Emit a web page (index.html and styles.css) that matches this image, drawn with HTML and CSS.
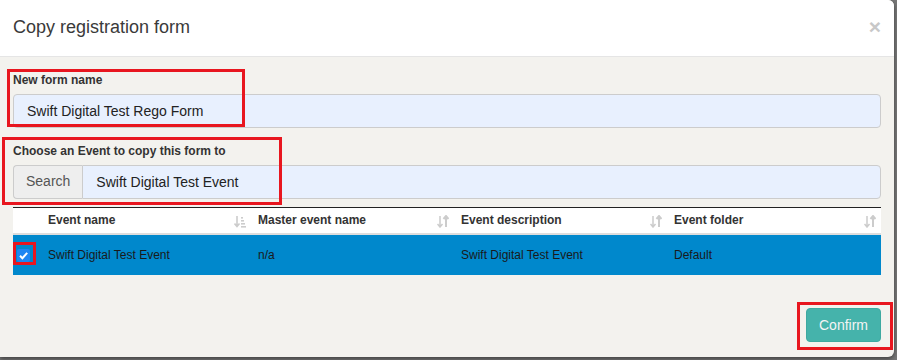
FILE: index.html
```html
<!DOCTYPE html>
<html lang="en">
<head>
    <meta charset="UTF-8">
    <meta name="viewport" content="width=device-width, initial-scale=1.0">
    <title>Copy registration form</title>
    <link rel="stylesheet" href="styles.css">
</head>
<body>
    <div class="modal">
        <!-- Header -->
        <div class="modal-header">
            <span class="close">&times;</span>
            <h4 class="modal-title">Copy registration form</h4>
        </div>

        <!-- Body -->
        <div class="modal-body">
            <div class="form-group">
                <label class="label">New form name</label>
                <input class="form-control" type="text" value="Swift Digital Test Rego Form">
            </div>
            <div class="form-group">
                <label class="label">Choose an Event to copy this form to</label>
                <div class="input-group">
                    <span class="addon">Search</span>
                    <input class="form-control grouped" type="text" value="Swift Digital Test Event">
                </div>
            </div>

            <table class="events">
                <colgroup>
                    <col class="col-check">
                    <col class="col-1">
                    <col class="col-2">
                    <col class="col-3">
                    <col class="col-4">
                </colgroup>
                <thead>
                    <tr>
                        <th></th>
                        <th>Event name
                            <svg class="sort" width="12" height="13" viewBox="0 0 12 13">
                                <path d="M3 1v10M0.5 8.5L3 11.5L5.5 8.5" fill="none" stroke="#ccc" stroke-width="1.6"/>
                                <rect x="7" y="2" width="2" height="1.6" fill="#ccc"/>
                                <rect x="7" y="5" width="3" height="1.6" fill="#ccc"/>
                                <rect x="7" y="8" width="4" height="1.6" fill="#ccc"/>
                                <rect x="7" y="11" width="5" height="1.6" fill="#ccc"/>
                            </svg>
                        </th>
                        <th>Master event name
                            <svg class="sort" width="12" height="13" viewBox="0 0 12 13">
                                <path d="M3 1v11M0.5 9L3 12L5.5 9" fill="none" stroke="#ccc" stroke-width="1.5"/>
                                <path d="M9 12V1M6.5 4L9 1L11.5 4" fill="none" stroke="#ccc" stroke-width="2"/>
                            </svg>
                        </th>
                        <th>Event description
                            <svg class="sort" width="12" height="13" viewBox="0 0 12 13">
                                <path d="M3 1v11M0.5 9L3 12L5.5 9" fill="none" stroke="#ccc" stroke-width="1.5"/>
                                <path d="M9 12V1M6.5 4L9 1L11.5 4" fill="none" stroke="#ccc" stroke-width="2"/>
                            </svg>
                        </th>
                        <th>Event folder
                            <svg class="sort" width="12" height="13" viewBox="0 0 12 13">
                                <path d="M3 1v11M0.5 9L3 12L5.5 9" fill="none" stroke="#ccc" stroke-width="1.5"/>
                                <path d="M9 12V1M6.5 4L9 1L11.5 4" fill="none" stroke="#ccc" stroke-width="2"/>
                            </svg>
                        </th>
                    </tr>
                </thead>
                <tbody>
                    <tr class="selected">
                        <td class="check-cell">
                            <span class="checkbox">
                                <svg width="13" height="13" viewBox="0 0 13 13">
                                    <path d="M3 6.8L5.4 9.2L10.2 3.8" fill="none" stroke="#fff" stroke-width="2"/>
                                </svg>
                            </span>
                        </td>
                        <td>Swift Digital Test Event</td>
                        <td>n/a</td>
                        <td>Swift Digital Test Event</td>
                        <td>Default</td>
                    </tr>
                </tbody>
            </table>
        </div>

        <!-- Footer -->
        <div class="modal-footer">
            <button class="btn-confirm">Confirm</button>
        </div>

        <!-- Annotation boxes -->
        <div class="mark mark-name"></div>
        <div class="mark mark-event"></div>
        <div class="mark mark-check"></div>
        <div class="mark mark-confirm"></div>
    </div>
</body>
</html>
```

FILE: styles.css
```css
html, body {
    height: 360px;
    overflow: hidden;
}

body {
    margin: 0;
    font-family: "Liberation Sans", Arial, sans-serif;
    font-size: 14px;
    line-height: 1.42857;
    color: #333;
    background-color: #767676;
}

.modal {
    position: relative;
    width: 894px;
    background-color: #f3f2ee;
    border-radius: 0 6px 6px 0;
    box-shadow: 0 2px 4px rgba(0, 0, 0, 0.45);
}

/* Header */
.modal-header {
    padding: 15px 13px;
    background-color: #fff;
    border-bottom: 1px solid #e5e5e5;
    border-radius: 0 6px 0 0;
}

.modal-title {
    margin: 0;
    font-size: 18px;
    font-weight: normal;
    line-height: 1.42857;
    color: #3a3a3a;
}

.close {
    float: right;
    margin-top: 1px;
    font-size: 21px;
    font-weight: bold;
    line-height: 1;
    color: #c8c8c8;
}

/* Body */
.modal-body {
    padding: 15px 13px 18px;
}

.form-group {
    margin-bottom: 15px;
}

.label {
    display: block;
    margin-bottom: 5px;
    font-size: 12px;
    font-weight: bold;
    color: #333;
}

.form-control {
    display: block;
    box-sizing: border-box;
    width: 100%;
    height: 34px;
    padding: 6px 13px;
    font-family: inherit;
    font-size: 14px;
    color: #222;
    background-color: #e8f0fe;
    border: 1px solid #ccc;
    border-radius: 4px;
}

.input-group {
    display: flex;
}

.addon {
    box-sizing: border-box;
    height: 34px;
    padding: 6px 12px;
    color: #555;
    background-color: #eee;
    border: 1px solid #ccc;
    border-right: none;
    border-radius: 4px 0 0 4px;
}

.form-control.grouped {
    flex: 1;
    border-radius: 0 4px 4px 0;
}

/* Table */
.events {
    width: 868px;
    margin-top: -7px;
    border-collapse: collapse;
    table-layout: fixed;
    font-size: 12px;
}

.col-check { width: 28px; }
.col-1 { width: 210px; }
.col-2 { width: 203px; }
.col-3 { width: 213px; }
.col-4 { width: 214px; }

.events thead th {
    position: relative;
    height: 27px;
    padding: 0 7px;
    text-align: left;
    font-weight: bold;
    color: #333;
    background-color: #fff;
    border-top: 1px solid #222;
    border-bottom: 2px solid #ddd;
    box-sizing: border-box;
}

.sort {
    position: absolute;
    top: 7px;
    right: 5px;
}

.events tbody td {
    height: 40px;
    padding: 0 7px;
    color: #1a1a1a;
}

.events tr.selected td {
    background-color: #0088cc;
}

.events td.check-cell {
    padding: 0 0 0 4px;
}

.checkbox {
    display: block;
    width: 13px;
    height: 13px;
    margin-top: 1px;
    background-color: #1f86f2;
    border-radius: 2px;
}

.checkbox svg {
    display: block;
}

/* Footer */
.modal-footer {
    display: flex;
    justify-content: flex-end;
    padding: 15px 13px;
}

.btn-confirm {
    box-sizing: border-box;
    height: 34px;
    padding: 6px 12px;
    font-family: inherit;
    font-size: 14px;
    color: #f4f4f4;
    background-color: #45b3ab;
    border: 1px solid #3ea9a1;
    border-radius: 4px;
}

/* Red highlight boxes */
.mark {
    position: absolute;
    box-sizing: border-box;
    border: 3px solid #e8161f;
}

.mark-name {
    left: 7px;
    top: 69px;
    width: 238px;
    height: 58px;
}

.mark-event {
    left: 2px;
    top: 137px;
    width: 280px;
    height: 68px;
}

.mark-check {
    left: 13px;
    top: 242px;
    width: 23px;
    height: 23px;
}

.mark-confirm {
    left: 797px;
    top: 302px;
    width: 96px;
    height: 48px;
}
```
